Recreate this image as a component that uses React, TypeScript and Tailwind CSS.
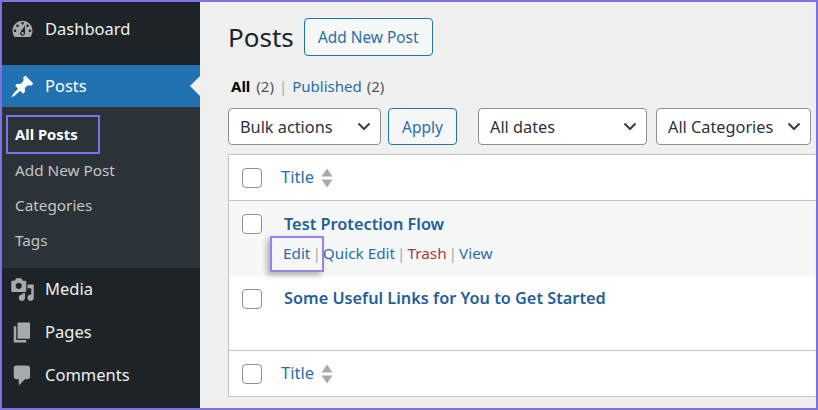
const FONT = "font-['Noto_Sans',sans-serif]";

function Dash({ d, className }: { d: string; className: string }) {
  return (
    <svg viewBox="0 0 20 20" className={className} fill="currentColor">
      <path d={d} />
    </svg>
  );
}

const ICONS = {
  dashboard:
    "M3.76 16h12.48c1.1-1.37 1.76-3.11 1.76-5 0-4.42-3.58-8-8-8s-8 3.58-8 8c0 1.89.66 3.63 1.76 5zM10 4c.55 0 1 .45 1 1s-.45 1-1 1-1-.45-1-1 .45-1 1-1zM6 6c.55 0 1 .45 1 1s-.45 1-1 1-1-.45-1-1 .45-1 1-1zm8 0c.55 0 1 .45 1 1s-.45 1-1 1-1-.45-1-1 .45-1 1-1zm-5.37 5.55L12 7v6c0 1.1-.9 2-2 2s-2-.9-2-2c0-.57.24-1.08.63-1.45zM4 10c.55 0 1 .45 1 1s-.45 1-1 1-1-.45-1-1 .45-1 1-1zm12 0c.55 0 1 .45 1 1s-.45 1-1 1-1-.45-1-1 .45-1 1-1zm-5 3c0-.55-.45-1-1-1s-1 .45-1 1 .45 1 1 1 1-.45 1-1z",
  pin: "M10.44 3.02l1.82-1.82 6.36 6.35-1.83 1.82c-1.05-.68-2.48-.57-3.41.36l-.75.75c-.92.93-1.04 2.35-.35 3.41l-1.83 1.82-2.41-2.41-2.8 2.79c-.42.42-3.38 2.71-3.8 2.29s1.86-3.39 2.28-3.81l2.79-2.79L4.1 9.36l1.83-1.82c1.05.69 2.48.57 3.4-.36l.75-.75c.93-.92 1.05-2.35.36-3.41z",
  media:
    "M13 11V4c0-.55-.45-1-1-1h-1.67L9 1H5L3.67 3H2c-.55 0-1 .45-1 1v7c0 .55.45 1 1 1h10c.55 0 1-.45 1-1zM7 4.5c1.38 0 2.5 1.12 2.5 2.5S8.38 9.5 7 9.5 4.5 8.38 4.5 7 5.62 4.5 7 4.5zM14 6h5v10.5c0 1.38-1.12 2.5-2.5 2.5S14 17.88 14 16.5s1.12-2.5 2.5-2.5c.17 0 .34.02.5.05V9h-3V6zm-4 8.05V13h2v3.5c0 1.38-1.12 2.5-2.5 2.5S7 17.88 7 16.5 8.12 14 9.5 14c.17 0 .34.02.5.05z",
  pages: "M6 15V2h10v13H6zm-1 1h8v2H3V5h2v11z",
  comments:
    "M5 2h9c1.1 0 2 .9 2 2v7c0 1.1-.9 2-2 2h-2l-5 5v-5H5c-1.1 0-2-.9-2-2V4c0-1.1.9-2 2-2z",
};

function MenuItem({ icon, label, active }: { icon: string; label: string; active?: boolean }) {
  return (
    <div
      className={`relative flex h-[42px] items-center text-[16.5px] ${
        active ? "bg-[#2271b1] text-white" : "text-[#f0f0f1]"
      }`}
    >
      <div className={`flex w-[43px] justify-center pr-[3px] ${active ? "text-white" : "text-[#a7aaad]"}`}>
        <Dash d={icon} className="h-[25px] w-[25px]" />
      </div>
      <span>{label}</span>
      {active && (
        <div className="absolute right-0 top-[11px] h-0 w-0 border-y-[10px] border-r-[10px] border-y-transparent border-r-[#f0f0f1]" />
      )}
    </div>
  );
}

function SubItem({ label, current }: { label: string; current?: boolean }) {
  return (
    <div
      className={`flex h-[35px] items-center pl-[13px] ${
        current ? "pb-[2px] text-[14.8px] font-bold text-white" : "text-[15.3px] text-[#c3c4c7]"
      }`}
    >
      {label}
    </div>
  );
}

function Select({ label, className }: { label: string; className: string }) {
  return (
    <div
      className={`flex h-[37px] items-center justify-between rounded-[4px] border border-[#8c8f94] bg-white pl-[11px] pr-[9px] text-[16.3px] text-[#2c3338] ${className}`}
    >
      <span className="pt-[2px]">{label}</span>
      <svg viewBox="0 0 14 9" className="h-[9px] w-[14px]" fill="none" stroke="#3c434a" strokeWidth="2.2">
        <path d="M1.5 1.5 7 7l5.5-5.5" />
      </svg>
    </div>
  );
}

function Checkbox() {
  return <div className="h-[20px] w-[20px] rounded-[4px] border border-[#8c8f94] bg-white" />;
}

function SortArrows() {
  return (
    <svg viewBox="0 0 12 20" className="ml-[7px] h-[20px] w-[12px]" fill="#a7aaad">
      <path d="M6 0.5 11.5 8.5H0.5Z" />
      <path d="M0.5 11.5H11.5L6 19.5Z" />
    </svg>
  );
}

function HeadRow({ className }: { className: string }) {
  return (
    <div className={`flex items-center pl-[13px] ${className}`}>
      <Checkbox />
      <span className="ml-[19px] text-[16.5px] text-[#2b6ea5]">Title</span>
      <SortArrows />
    </div>
  );
}

export default function App() {
  return (
    <div
      className={`${FONT} relative flex h-[410px] w-[818px] overflow-hidden border-2 border-[#7d72e4] bg-[#f0f0f1]`}
    >
      <aside className="h-full w-[198px] shrink-0 bg-[#1d2327] pt-[6px]">
        <MenuItem icon={ICONS.dashboard} label="Dashboard" />
        <div className="h-[15px]" />
        <MenuItem icon={ICONS.pin} label="Posts" active />
        <div className="relative bg-[#2c3338] pb-[10px] pt-[11px]">
          <SubItem label="All Posts" current />
          <SubItem label="Add New Post" />
          <SubItem label="Categories" />
          <SubItem label="Tags" />
          <div className="absolute left-[4px] top-[8px] h-[39px] w-[94px] border-2 border-[#7d72e4]" />
        </div>
        <div className="flex flex-col gap-[1px]">
          <MenuItem icon={ICONS.media} label="Media" />
          <MenuItem icon={ICONS.pages} label="Pages" />
          <MenuItem icon={ICONS.comments} label="Comments" />
        </div>
      </aside>

      <main className="min-w-0 flex-1 pl-[28px] pt-[16px]">
        <div className="flex h-[38px] items-center">
          <h1 className="text-[26px] text-[#1d2327]">Posts</h1>
          <div className="ml-[10px] flex h-[38px] w-[129px] items-center justify-center rounded-[4px] border border-[#2271b1] bg-[#f6f7f7] pt-[2px] text-[15.4px] text-[#2b6ea5]">
            Add New Post
          </div>
        </div>

        <div className="mt-[18px] flex h-[24px] items-center pl-[3px] text-[15px] text-[#50575e]">
          <span className="font-bold text-black">All</span>
          <span className="ml-[6px]">(2)</span>
          <span className="mx-[5px] text-[#a7aaad]">|</span>
          <span className="text-[#2b6ea5]">Published</span>
          <span className="ml-[5px]">(2)</span>
        </div>

        <div className="mt-[10px] flex h-[37px] items-center">
          <Select label="Bulk actions" className="w-[153px]" />
          <div className="ml-[7px] flex h-[37px] w-[69px] items-center justify-center rounded-[4px] border border-[#2271b1] bg-[#f6f7f7] pt-[2px] text-[15.5px] text-[#2b6ea5]">
            Apply
          </div>
          <Select label="All dates" className="ml-[21px] w-[169px]" />
          <Select label="All Categories" className="ml-[9px] w-[155px]" />
        </div>

        <div className="relative mt-[9px] border-y border-l border-[#c3c4c7] bg-white">
          <HeadRow className="h-[46px] border-b border-[#c3c4c7]" />
          <div className="h-[75px] bg-[#f6f7f7] pl-[13px] pt-[13px]">
            <div className="flex items-start">
              <Checkbox />
              <span className="ml-[22px] mt-[-2px] text-[16.3px] font-semibold text-[#1f6197]">Test Protection Flow</span>
            </div>
            <div className="ml-[41px] mt-[6px] flex items-center text-[15.3px] text-[#a7aaad]">
              <span className="text-[#2b6ea5]">Edit</span>
              <span className="mx-[2px]">|</span>
              <span className="text-[#2b6ea5]">Quick Edit</span>
              <span className="mx-[2px]">|</span>
              <span className="text-[#a83a3b]">Trash</span>
              <span className="mx-[2px]">|</span>
              <span className="text-[#2b6ea5]">View</span>
            </div>
          </div>
          <div className="h-[74px] pl-[13px] pt-[13px]">
            <div className="flex items-start">
              <Checkbox />
              <span className="ml-[22px] mt-[-3px] text-[16.3px] font-semibold text-[#1f6197]">
                Some Useful Links for You to Get Started
              </span>
            </div>
          </div>
          <HeadRow className="h-[46px] border-t border-[#c3c4c7]" />
          <div className="absolute left-[41px] top-[81px] h-[36px] w-[54px] border-2 border-[#8f86ea] shadow-[-3px_3px_6px_rgba(0,0,0,0.3)]" />
        </div>
      </main>
    </div>
  );
}
